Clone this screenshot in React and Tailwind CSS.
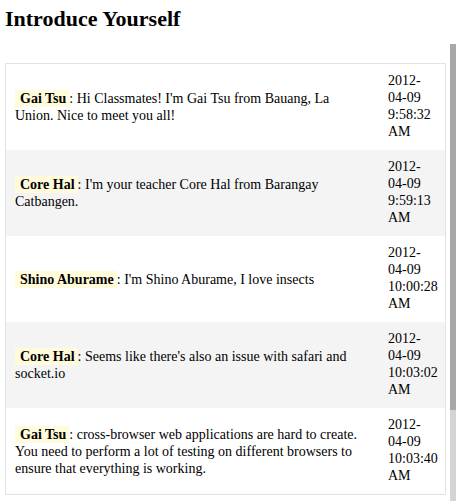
const rows = [
  { name: "Gai Tsu", msg: "Hi Classmates! I'm Gai Tsu from Bauang, La Union. Nice to meet you all!", date: ["2012-", "04-09", "9:58:32", "AM"] },
  { name: "Core Hal", msg: "I'm your teacher Core Hal from Barangay Catbangen.", date: ["2012-", "04-09", "9:59:13", "AM"] },
  { name: "Shino Aburame", msg: "I'm Shino Aburame, I love insects", date: ["2012-", "04-09", "10:00:28", "AM"] },
  { name: "Core Hal", msg: "Seems like there's also an issue with safari and socket.io", date: ["2012-", "04-09", "10:03:02", "AM"] },
  { name: "Gai Tsu", msg: "cross-browser web applications are hard to create. You need to perform a lot of testing on different browsers to ensure that everything is working.", date: ["2012-", "04-09", "10:03:40", "AM"] },
];

export default function App() {
  return (
    <div className="relative w-[461px] h-[501px] overflow-hidden bg-white text-black" style={{ fontFamily: '"Liberation Serif", "Times New Roman", serif' }}>
      <div className="px-[5px] pt-[7px]">
        <h1 className="text-[22px] font-bold leading-[24px] m-0">Introduce Yourself</h1>
        <div className="mt-[32px] w-[441px] border border-[#e3e3e3]">
          {rows.map((r, i) => (
            <div key={i} className={"flex h-[86px] items-center " + (i % 2 === 1 ? "bg-[#f4f4f4]" : "bg-white")}>
              <div className="flex-1 pl-[9px] pr-[17px] text-[14px] leading-[17px]">
                <span className="bg-[#fffbdb] font-bold pl-[5px] pr-[3px] py-[1px]">{r.name}</span>: {r.msg}
              </div>
              <div className="w-[57px] shrink-0 text-[14px] leading-[17px] flex flex-col -mt-[3px]">
                {r.date.map((d, j) => (
                  <span key={j}>{d}</span>
                ))}
              </div>
            </div>
          ))}
        </div>
      </div>
      <div className="absolute left-[450px] top-[44px] w-[6px] h-[457px] bg-[#d4d4d4]">
        <div className="h-[366px] bg-[#a8a8a8]" />
      </div>
    </div>
  );
}
